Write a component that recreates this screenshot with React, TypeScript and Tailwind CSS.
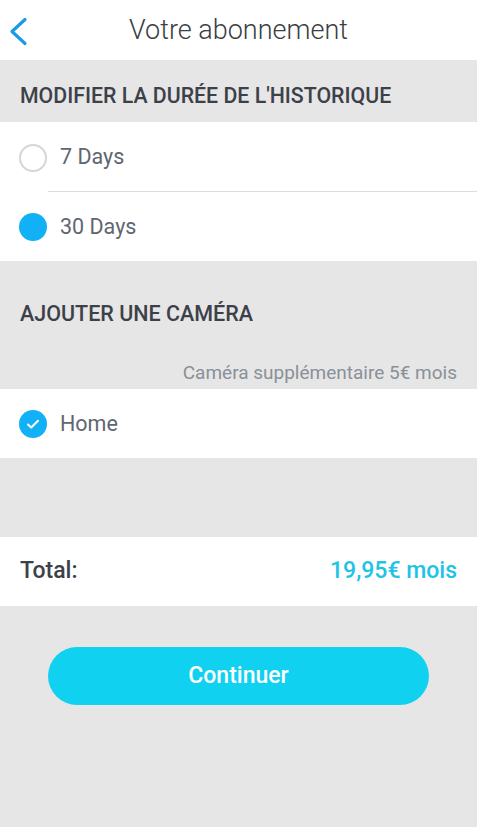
const Radio = ({ checked }: { checked: boolean }) =>
  checked ? (
    <span className="w-[28px] h-[28px] rounded-full bg-[#12b1f6] shrink-0" />
  ) : (
    <span className="w-[28px] h-[28px] rounded-full border-2 border-[#d6d6d6] shrink-0" />
  )

const Check = () => (
  <span className="w-[28px] h-[28px] rounded-full bg-[#12b1f6] shrink-0 flex items-center justify-center">
    <svg width="16" height="16" viewBox="0 0 16 16" fill="none">
      <path d="M3 8.5l3.2 3L13 4.8" stroke="white" strokeWidth="2" strokeLinecap="round" strokeLinejoin="round" />
    </svg>
  </span>
)

export default function App() {
  return (
    <div className="w-[477px] h-[827px] bg-[#e6e6e6] flex flex-col font-['Roboto',sans-serif] text-[#3c4149]">
      <div className="h-[60px] bg-white relative flex items-center justify-center">
        <svg className="absolute left-[8px] top-[16px]" width="20" height="30" viewBox="0 0 20 30" fill="none">
          <path d="M17 3.5L4 15.5l13 12" stroke="#1a9be6" strokeWidth="3.2" strokeLinecap="round" strokeLinejoin="round" />
        </svg>
        <h1 className="text-[27px] font-light text-[#3a3e45]">Votre abonnement</h1>
      </div>

      <div className="h-[62px] flex items-center px-[20px] pt-[10px]">
        <h2 className="text-[21.3px] font-medium">MODIFIER LA DURÉE DE L'HISTORIQUE</h2>
      </div>

      <div className="bg-white">
        <div className="h-[69px] flex items-center gap-[13px] pl-[19px] pt-[2px]">
          <Radio checked={false} />
          <span className="text-[21.5px] text-[#5f6670]">7 Days</span>
        </div>
        <div className="ml-[48px] h-px bg-[#dcdcdc]" />
        <div className="h-[69px] flex items-center gap-[13px] pl-[19px] pt-[1px]">
          <Radio checked />
          <span className="text-[21.5px] text-[#5f6670]">30 Days</span>
        </div>
      </div>

      <div className="h-[128px] flex flex-col px-[20px]">
        <h2 className="text-[21.5px] font-medium mt-[37px]">AJOUTER UNE CAMÉRA</h2>
        <p className="text-[19px] text-[#8a9099] text-right mt-auto mb-[2px]">Caméra supplémentaire 5€ mois</p>
      </div>

      <div className="bg-white h-[69px] flex items-center gap-[13px] pl-[19px] pt-[1px]">
        <Check />
        <span className="text-[21.5px] text-[#5f6670]">Home</span>
      </div>

      <div className="h-[79px]" />

      <div className="bg-white h-[69px] flex items-center justify-between px-[20px]">
        <span className="text-[23px] font-medium text-[#3c4149]">Total:</span>
        <span className="text-[23px] font-medium text-[#1fc3e6]">19,95€ mois</span>
      </div>

      <div className="flex justify-center pt-[41px]">
        <button className="w-[381px] h-[58px] rounded-[29px] bg-[#10d1ef] text-white text-[23px] font-medium">
          Continuer
        </button>
      </div>
    </div>
  )
}
